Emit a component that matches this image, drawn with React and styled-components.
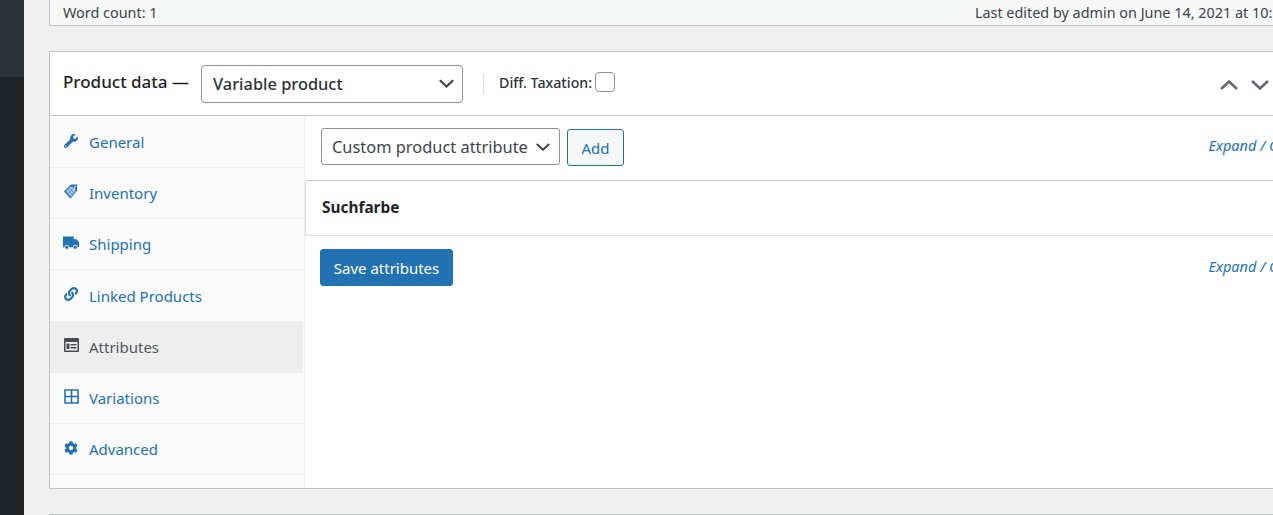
import React from 'react';
import styled, { createGlobalStyle } from 'styled-components';
import { FaWrench, FaLink, FaCog } from 'react-icons/fa';

const GlobalStyle = createGlobalStyle`
  html, body {
    margin: 0;
    padding: 0;
    height: 515px;
    overflow: hidden;
    background: #f0f0f1;
  }
  body {
    font-family: "Noto Sans", "Open Sans", "Liberation Sans", sans-serif;
    color: #3c434a;
  }
`;

const TagIcon = () => (
  <svg width="17" height="17" viewBox="0 0 17 17">
    <path d="M1 8.500 7.500 2l1.500-1h6v6.500l-1 1.500-6 7Z" fill="#2271b1" />
    <path d="M3 8.500 8 3.500l4.500 1 1 4.500L8.500 14Z" fill="#b9d2e6" />
    <path d="M5 7 10.500 12.500M7 5 12.500 10.500M5.500 10.500 11 5M8 13 13 8" stroke="#2271b1" strokeWidth="0.700" />
    <circle cx="12.800" cy="3.200" r="0.900" fill="#fff" />
  </svg>
);

const TruckIcon = () => (
  <svg width="17" height="14" viewBox="0 0 17 14">
    <path d="M0 0h11.500v3h3l2.500 3v5.500H0Z" fill="#2271b1" />
    <circle cx="4" cy="11.500" r="2.200" fill="#2271b1" stroke="#fafafa" strokeWidth="0.900" />
    <circle cx="13" cy="11.500" r="2.200" fill="#2271b1" stroke="#fafafa" strokeWidth="0.900" />
  </svg>
);

const CardIcon = () => (
  <svg width="15" height="14" viewBox="0 0 15 14">
    <rect width="15" height="14" rx="1" fill="#464b50" />
    <rect x="1.500" y="4" width="12" height="8.500" fill="#eee" />
    <rect x="2.500" y="5.500" width="3" height="5.500" fill="#464b50" />
    <rect x="6.500" y="6" width="6" height="1.500" fill="#464b50" />
    <rect x="6.500" y="9" width="6" height="1.500" fill="#464b50" />
  </svg>
);

const GridIcon = () => (
  <svg width="15" height="15" viewBox="0 0 15 15">
    <path d="M1 1h13v13H1zM7.500 1v13M1 7.500h13" fill="none" stroke="#2271b1" strokeWidth="1.600" />
  </svg>
);

const Chevron = ({ up, size = 18, color = '#646970' }) => (
  <svg width={size} height={size} viewBox="0 0 18 18">
    <path d={up ? 'M1 13 9 5.500l8 7.500' : 'M1 5l8 7.500L17 5'} fill="none" stroke={color} strokeWidth="2.600" />
  </svg>
);

const tabs = [
  { label: 'General', icon: <FaWrench size={14} color="#2271b1" /> },
  { label: 'Inventory', icon: <TagIcon /> },
  { label: 'Shipping', icon: <TruckIcon /> },
  { label: 'Linked Products', icon: <FaLink size={14} color="#2271b1" /> },
  { label: 'Attributes', icon: <CardIcon />, active: true },
  { label: 'Variations', icon: <GridIcon /> },
  { label: 'Advanced', icon: <FaCog size={14} color="#2271b1" /> },
];

export default function App() {
  return (
    <>
      <GlobalStyle />
      <Page>
        <AdminMenu>
          <SubMenu />
        </AdminMenu>
        <Main>
          <EditorStatus>
            <span>Word count: 1</span>
            <span>Last edited by admin on June 14, 2021 at 10:15 am</span>
          </EditorStatus>
          <Panel>
            <PanelHeader>
              <PanelTitle>Product data —</PanelTitle>
              <TypeSelect>
                Variable product
                <Chevron size={15} color="#3c434a" />
              </TypeSelect>
              <Divider />
              <TaxLabel>Diff. Taxation:</TaxLabel>
              <Checkbox />
              <Handles>
                <Chevron up />
                <Chevron />
              </Handles>
            </PanelHeader>
            <PanelBody>
              <Tabs>
                {tabs.map((tab) => (
                  <Tab key={tab.label} $active={tab.active}>
                    <TabIcon>{tab.icon}</TabIcon>
                    {tab.label}
                  </Tab>
                ))}
              </Tabs>
              <Content>
                <Toolbar>
                  <AttributeSelect>
                    Custom product attribute
                    <Chevron size={14} color="#3c434a" />
                  </AttributeSelect>
                  <AddButton>Add</AddButton>
                  <ExpandLink>Expand / Close</ExpandLink>
                </Toolbar>
                <AttributeRow>Suchfarbe</AttributeRow>
                <Toolbar $bottom>
                  <SaveButton>Save attributes</SaveButton>
                  <ExpandLink $bottom>Expand / Close</ExpandLink>
                </Toolbar>
              </Content>
            </PanelBody>
          </Panel>
          <NextPanel />
        </Main>
      </Page>
    </>
  );
}

const Page = styled.div`
  display: flex;
  width: 1273px;
  height: 515px;
  overflow: hidden;
`;

const AdminMenu = styled.div`
  flex: 0 0 24px;
  background: #1d2327;
`;

const SubMenu = styled.div`
  height: 77px;
  background: #2c3338;
`;

const Main = styled.div`
  flex: 0 0 1300px;
  padding-left: 25px;
  box-sizing: border-box;
`;

const EditorStatus = styled.div`
  display: flex;
  justify-content: space-between;
  box-sizing: border-box;
  height: 26px;
  padding: 0 9px 0 13px;
  background: #f6f7f7;
  border: 1px solid #c3c4c7;
  border-top: none;
  font-size: 14.400px;
  line-height: 25px;
  color: #3c434a;
`;

const Panel = styled.div`
  box-sizing: border-box;
  height: 438px;
  margin-top: 25px;
  background: #fff;
  border: 1px solid #c3c4c7;
`;

const PanelHeader = styled.div`
  display: flex;
  align-items: center;
  box-sizing: border-box;
  height: 64px;
  padding: 0 54px 0 13px;
  border-bottom: 1px solid #c3c4c7;
`;

const PanelTitle = styled.h2`
  margin: 0 12px 4px 0;
  font-size: 17px;
  line-height: 24px;
  font-weight: 500;
  color: #1d2327;
`;

const TypeSelect = styled.div`
  display: flex;
  align-items: center;
  justify-content: space-between;
  box-sizing: border-box;
  width: 262px;
  height: 38px;
  padding: 0 8px 0 11px;
  background: #fff;
  border: 1px solid #8c8f94;
  border-radius: 4px;
  font-size: 16.400px;
  font-weight: 500;
  color: #2c3338;
`;

const Divider = styled.div`
  width: 1px;
  height: 20px;
  margin: 0 15px 0 20px;
  background: #dcdcde;
`;

const TaxLabel = styled.label`
  margin: 0 3px 2px 0;
  font-size: 14.200px;
  font-weight: 500;
  color: #2c3338;
`;

const Checkbox = styled.div`
  box-sizing: border-box;
  width: 20px;
  height: 20px;
  margin-bottom: 3px;
  background: #fff;
  border: 1px solid #8c8f94;
  border-radius: 4px;
`;

const Handles = styled.div`
  display: flex;
  gap: 13px;
  margin: 2px 0 0 auto;
`;

const PanelBody = styled.div`
  display: flex;
  height: 372px;
`;

const Tabs = styled.ul`
  flex: 0 0 254px;
  margin: 0;
  padding: 1px 0 0;
  list-style: none;
  background: #fafafa;
  border-right: 1px solid #eee;
`;

const Tab = styled.li`
  display: flex;
  align-items: center;
  box-sizing: border-box;
  height: 51.170px;
  margin-right: 1px;
  padding-left: 13px;
  font-size: 15px;
  color: ${(p) => (p.$active ? '#50575e' : '#2271b1')};
  background: ${(p) => (p.$active ? '#eee' : 'transparent')};
  border-bottom: 1px solid ${(p) => (p.$active ? '#eee' : '#f0f0f0')};
`;

const TabIcon = styled.span`
  display: flex;
  justify-content: center;
  width: 16px;
  margin-right: 10px;
  margin-bottom: 3px;
`;

const Content = styled.div`
  flex: 1;
`;

const Toolbar = styled.div`
  display: flex;
  align-items: center;
  box-sizing: border-box;
  height: ${(p) => (p.$bottom ? '62px' : '64px')};
  padding: ${(p) => (p.$bottom ? '0 20px 0 15px' : '0 20px 0 16px')};
`;

const AttributeSelect = styled.div`
  display: flex;
  align-items: center;
  justify-content: space-between;
  box-sizing: border-box;
  width: 239px;
  height: 37px;
  margin-bottom: 3px;
  padding: 0 9px 0 10px;
  background: #fff;
  border: 1px solid #8c8f94;
  border-radius: 3px;
  font-size: 16.400px;
  color: #3c434a;
`;

const AddButton = styled.button`
  box-sizing: border-box;
  width: 57px;
  height: 37px;
  margin: 0 0 1px 7px;
  padding: 0;
  background: #f6f7f7;
  border: 1px solid #2271b1;
  border-radius: 3px;
  font: inherit;
  font-size: 15px;
  color: #2271b1;
`;

const SaveButton = styled.button`
  box-sizing: border-box;
  width: 133px;
  height: 37px;
  padding: 1px 0 0;
  background: #2271b1;
  border: 1px solid #2271b1;
  border-radius: 3px;
  font: inherit;
  font-size: 15px;
  color: #fff;
`;

const ExpandLink = styled.a`
  margin: 0 0 ${(p) => (p.$bottom ? '2px' : '6px')} auto;
  font-size: 14.500px;
  font-style: italic;
  color: #2271b1;
`;

const AttributeRow = styled.div`
  box-sizing: border-box;
  height: 56px;
  padding-left: 16px;
  background: #fff;
  border: 1px solid #ddd;
  border-top-color: #c3c4c7;
  border-right: none;
  border-radius: 3px 0 0 3px;
  font-size: 15.400px;
  font-weight: 700;
  line-height: 53px;
  color: #1d2327;
`;

const NextPanel = styled.div`
  height: 10px;
  margin-top: 25px;
  background: #fff;
  border-top: 1px solid #c3c4c7;
`;
